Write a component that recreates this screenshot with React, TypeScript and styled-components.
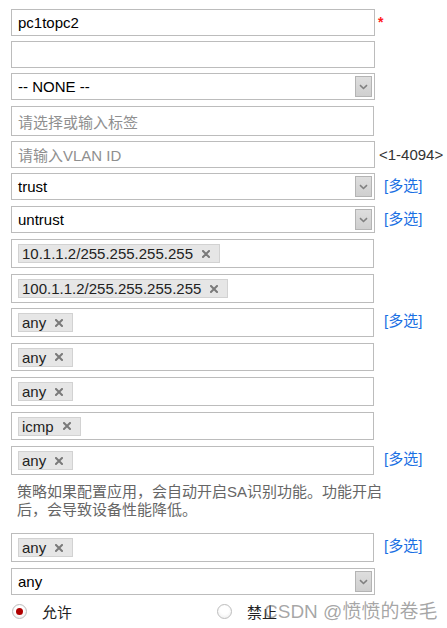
import React from 'react';
import styled, { createGlobalStyle } from 'styled-components';

const Global = createGlobalStyle`
  html, body { margin: 0; padding: 0; background: #fff; }
  body {
    font-family: "Liberation Sans", Arial, "Noto Sans CJK SC", sans-serif;
    font-size: 15px;
    color: #000;
  }
`;

const Page = styled.div`
  position: relative;
  width: 447px;
  height: 628px;
  overflow: hidden;
  box-sizing: border-box;
  padding: 9px 0 0 11px;
  display: flex;
  flex-direction: column;
`;

const Row = styled.div<{ $gap?: number }>`
  display: grid;
  grid-template-columns: 364px auto;
  column-gap: 3px;
  align-items: center;
  margin-bottom: ${(p) => (p.$gap ?? 6)}px;
`;

const Field = styled.div<{ $h?: number; $w?: number }>`
  box-sizing: border-box;
  height: ${(p) => p.$h ?? 27}px;
  width: ${(p) => p.$w ?? 364}px;
  border: 1px solid #bcbcbc;
  background: #fff;
  display: flex;
  align-items: center;
  gap: 6px;
  padding: 0 2px 0 6px;
  font-size: 15px;
  color: #000;
`;

const Value = styled.span`
  flex: 1;
  white-space: nowrap;
  font-family: "Liberation Sans", Arial, "Noto Sans CJK SC", sans-serif;
`;

const Placeholder = styled.span`
  flex: 1;
  color: #8f8f8f;
  white-space: nowrap;
  font-family: "Liberation Sans", Arial, "Noto Sans CJK SC", sans-serif;
`;

const ArrowBtn = styled.span`
  box-sizing: border-box;
  width: 17px;
  height: 21px;
  border: 1px solid #b4b4b4;
  background: linear-gradient(#dedede, #cfcfcf);
  display: flex;
  align-items: center;
  justify-content: center;
`;

const Chip = styled.span`
  box-sizing: border-box;
  height: 19px;
  display: inline-flex;
  align-items: center;
  gap: 9px;
  padding: 0 9px 0 3px;
  background: #e6e6e6;
  border: 1px solid #d2d2d2;
  color: #222;
  font-size: 15px;
  white-space: nowrap;
`;

const Required = styled.span`
  color: #ff1a1a;
  font-size: 14px;
  font-weight: bold;
  align-self: start;
  margin-top: 6px;
  line-height: 1;
`;

const Range = styled.span`
  color: #333;
  font-size: 15px;
  margin-left: 1px;
`;

const Multi = styled.span`
  color: #1a6fe3;
  font-size: 15px;
  margin-left: 6px;
  font-family: "Liberation Sans", "Noto Sans CJK SC", sans-serif;
  align-self: start;
  margin-top: 1px;
`;

const Desc = styled.div`
  margin: 8px 0 14px 6px;
  color: #666;
  font-size: 15px;
  line-height: 18px;
  font-family: "Liberation Sans", Arial, "Noto Sans CJK SC", sans-serif;
`;

const RadioGroup = styled.div`
  display: grid;
  grid-template-columns: 205px auto;
  padding-left: 1px;
  margin-top: 6px;
`;

const Option = styled.label`
  display: flex;
  align-items: center;
  gap: 15px;
  color: #222;
  font-size: 15px;
  font-family: "Liberation Sans", "Noto Sans CJK SC", sans-serif;
`;

const RadioCircle = styled.span<{ $checked?: boolean }>`
  box-sizing: border-box;
  width: 15px;
  height: 15px;
  border-radius: 50%;
  border: 1px solid #bdbdbd;
  background: radial-gradient(circle at 50% 40%, #fff 40%, #e9e9e9 100%);
  display: flex;
  align-items: center;
  justify-content: center;
  &::after {
    content: "";
    display: ${(p) => (p.$checked ? 'block' : 'none')};
    width: 7px;
    height: 7px;
    border-radius: 50%;
    background: #b00000;
  }
`;

const Watermark = styled.div`
  position: absolute;
  left: 264px;
  top: 596px;
  font-size: 19px;
  color: rgba(90, 90, 90, 0.55);
  font-family: "Liberation Sans", Arial, "Noto Sans CJK SC", sans-serif;
  white-space: nowrap;
  pointer-events: none;
`;

const Chevron = () => (
  <svg width="9" height="6" viewBox="0 0 9 6">
    <path d="M1 1.2 L4.5 4.5 L8 1.2" fill="none" stroke="#808080" strokeWidth="1.6" />
  </svg>
);

const Cross = () => (
  <svg width="8" height="8" viewBox="0 0 8 8">
    <path d="M1 1 L7 7 M7 1 L1 7" stroke="#7a7a7a" strokeWidth="2" strokeLinecap="square" />
  </svg>
);

const Select = ({ value }: { value: string }) => (
  <Field>
    <Value>{value}</Value>
    <ArrowBtn>
      <Chevron />
    </ArrowBtn>
  </Field>
);

const TagField = ({ tag, h = 29 }: { tag: string; h?: number }) => (
  <Field $h={h} $w={363}>
    <Chip>
      {tag}
      <Cross />
    </Chip>
  </Field>
);

export default function App() {
  return (
    <>
      <Global />
      <Page>
        <Row $gap={5}>
          <Field>
            <Value>pc1topc2</Value>
          </Field>
          <Required>*</Required>
        </Row>
        <Row $gap={5}>
          <Field />
        </Row>
        <Row>
          <Select value="-- NONE --" />
        </Row>
        <Row $gap={5}>
          <Field $h={30} $w={363}>
            <Placeholder>请选择或输入标签</Placeholder>
          </Field>
        </Row>
        <Row $gap={5}>
          <Field>
            <Placeholder>请输入VLAN ID</Placeholder>
          </Field>
          <Range>&lt;1-4094&gt;</Range>
        </Row>
        <Row>
          <Select value="trust" />
          <Multi>[多选]</Multi>
        </Row>
        <Row>
          <Select value="untrust" />
          <Multi>[多选]</Multi>
        </Row>
        <Row>
          <TagField tag="10.1.1.2/255.255.255.255" />
        </Row>
        <Row $gap={5}>
          <TagField tag="100.1.1.2/255.255.255.255" />
        </Row>
        <Row>
          <TagField tag="any" />
          <Multi>[多选]</Multi>
        </Row>
        <Row>
          <TagField tag="any" h={28} />
        </Row>
        <Row>
          <TagField tag="any" />
        </Row>
        <Row>
          <TagField tag="icmp" h={28} />
        </Row>
        <Row $gap={0}>
          <TagField tag="any" />
          <Multi>[多选]</Multi>
        </Row>
        <Desc>
          策略如果配置应用，会自动开启SA识别功能。功能开启
          <br />
          后，会导致设备性能降低。
        </Desc>
        <Row>
          <TagField tag="any" />
          <Multi>[多选]</Multi>
        </Row>
        <Row $gap={0}>
          <Select value="any" />
        </Row>
        <RadioGroup>
          <Option>
            <RadioCircle $checked />
            允许
          </Option>
          <Option>
            <RadioCircle />
            禁止
          </Option>
        </RadioGroup>
        <Watermark>CSDN @愤愤的卷毛</Watermark>
      </Page>
    </>
  );
}
